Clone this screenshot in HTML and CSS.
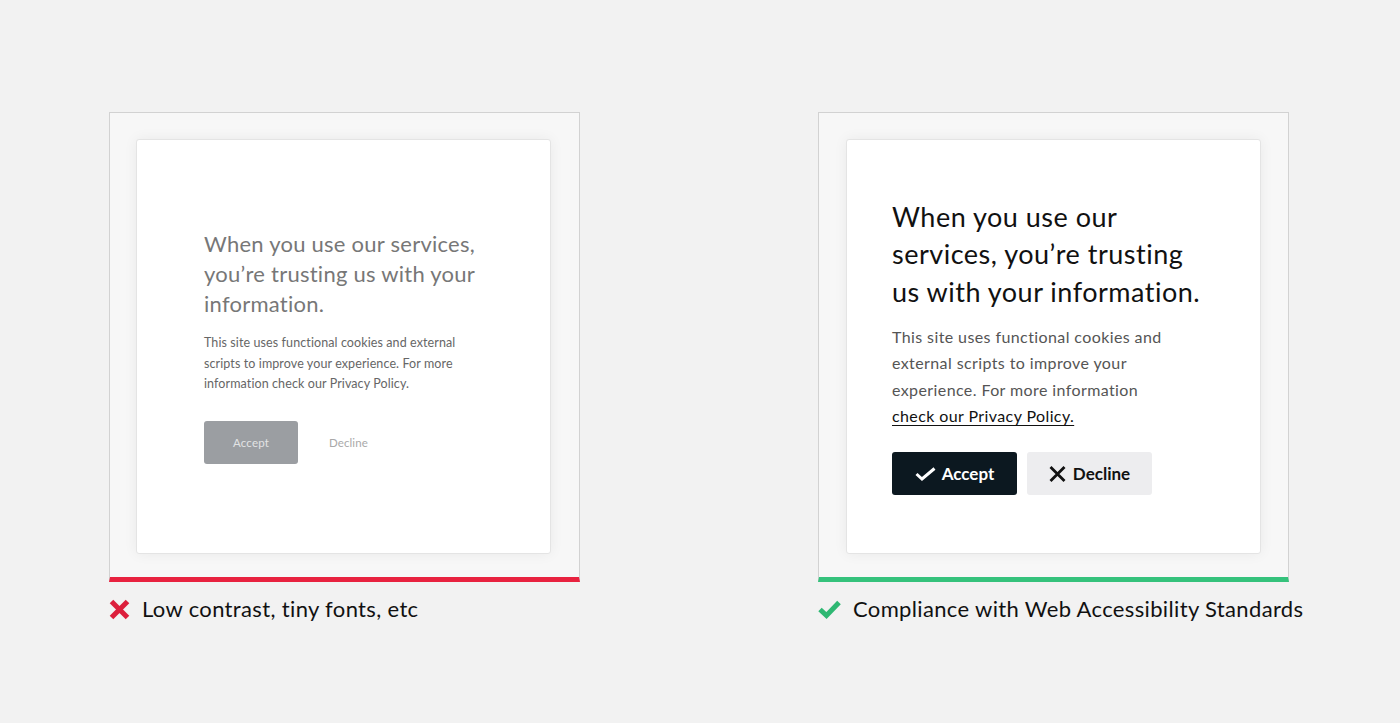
FILE: index.html
```html
<!DOCTYPE html>
<html>
<head>
<meta charset="utf-8">
<link rel="stylesheet" href="styles.css">
</head>
<body>
<main class="page">
  <section class="column">
    <div class="frame frame-bad">
      <div class="card card-bad">
        <h2 class="title-bad">When you use our services,<br>you’re trusting us with your<br>information.</h2>
        <p class="text-bad">This site uses functional cookies and external<br>scripts to improve your experience. For more<br>information check our Privacy Policy.</p>
        <div class="actions-bad">
          <button class="btn-bad-accept">Accept</button>
          <span class="btn-bad-decline">Decline</span>
        </div>
      </div>
    </div>
    <div class="label">
      <svg class="label-icon" width="21" height="21" viewBox="0 0 21 21"><path d="M2.5 2.5 L18.5 18.5 M18.5 2.5 L2.5 18.5" stroke="#dc1f3c" stroke-width="5" fill="none"/></svg>
      <span>Low contrast, tiny fonts, etc</span>
    </div>
  </section>

  <section class="column">
    <div class="frame frame-good">
      <div class="card card-good">
        <h2 class="title-good">When you use our<br>services, you’re trusting<br>us with your information.</h2>
        <p class="text-good">This site uses functional cookies and<br>external scripts to improve your<br>experience. For more information<br><a class="link" href="#">check our Privacy Policy.</a></p>
        <div class="actions-good">
          <button class="btn btn-accept">
            <svg width="21" height="14" viewBox="0 0 21 14"><path d="M1.5 7 L7 12 L19.5 1.5" stroke="#fff" stroke-width="3" fill="none"/></svg>
            <span>Accept</span>
          </button>
          <button class="btn btn-decline">
            <svg width="17" height="16" viewBox="0 0 17 16"><path d="M1.5 1 L15.5 15 M15.5 1 L1.5 15" stroke="#111" stroke-width="2.8" fill="none"/></svg>
            <span>Decline</span>
          </button>
        </div>
      </div>
    </div>
    <div class="label">
      <svg class="label-icon" width="23" height="21" viewBox="0 0 23 21"><path d="M2 10.5 L8.5 16.5 L21 3.5" stroke="#2fb873" stroke-width="5" fill="none"/></svg>
      <span>Compliance with Web Accessibility Standards</span>
    </div>
  </section>
</main>
</body>
</html>
```

FILE: styles.css
```css
* { box-sizing: border-box; }
html, body { margin: 0; padding: 0; }
body {
  background: #f2f2f2;
  font-family: Lato, "Open Sans", "Liberation Sans", sans-serif;
  width: 1400px;
  height: 723px;
  overflow: hidden;
}
.page {
  display: flex;
  gap: 238px;
  padding: 112px 0 0 109px;
}
.column {
  width: 471px;
  display: flex;
  flex-direction: column;
}
.frame {
  width: 471px;
  background: #f7f7f7;
  border: 1px solid #d2d2d2;
  border-bottom: 5px solid #e8223f;
  padding: 26px 28px 23px 26px;
}
.frame-good {
  border-bottom-color: #35c27c;
  padding-left: 27px;
  padding-right: 27px;
}
.card {
  width: 415px;
  height: 415px;
  background: #fff;
  border: 1px solid #e4e4e4;
  border-radius: 3px;
  box-shadow: 0 0 14px rgba(0, 0, 0, 0.06);
  display: flex;
  flex-direction: column;
  justify-content: center;
}
.card-bad { padding-left: 67px; }
.card-good { padding-left: 45px; }

h2, p { margin: 0; font-weight: 400; }

.title-bad {
  font-size: 22px;
  letter-spacing: 0.25px;
  line-height: 30px;
  color: #777;
  white-space: nowrap;
}
.text-bad {
  margin-top: 14px;
  font-size: 12.5px;
  letter-spacing: 0.1px;
  line-height: 20.5px;
  color: #666;
  white-space: nowrap;
}
.actions-bad {
  margin-top: 26px;
  display: flex;
  align-items: center;
  gap: 31px;
}
.btn-bad-accept {
  width: 94px;
  height: 43px;
  border: none;
  border-radius: 3px;
  background: #9b9ea2;
  color: #e2e3e4;
  font-family: inherit;
  font-size: 11.5px;
  letter-spacing: 0.2px;
}
.btn-bad-decline {
  font-size: 11.5px;
  letter-spacing: 0.1px;
  color: #a9a9a9;
}

.title-good {
  font-size: 27px;
  letter-spacing: 0.5px;
  line-height: 37.5px;
  color: #111;
  white-space: nowrap;
}
.text-good {
  margin-top: 14px;
  font-size: 16px;
  letter-spacing: 0.4px;
  line-height: 26.3px;
  color: #555;
  white-space: nowrap;
}
.link {
  color: #111;
  text-decoration: underline;
  text-underline-offset: 3px;
}
.actions-good {
  margin-top: 23px;
  display: flex;
  gap: 10px;
}
.btn {
  width: 125px;
  height: 43px;
  border: none;
  border-radius: 3px;
  display: flex;
  align-items: center;
  justify-content: center;
  gap: 6px;
  font-family: inherit;
  font-size: 17px;
  font-weight: 700;
  padding: 0;
}
.btn-accept { background: #0c1820; color: #fff; }
.btn-decline { background: #ededef; color: #111; gap: 7px; }

.label {
  margin-top: 13px;
  display: flex;
  align-items: center;
  gap: 12px;
  font-size: 22px;
  letter-spacing: 0.35px;
  line-height: 28px;
  color: #111;
  white-space: nowrap;
}
.label-icon { flex: none; }
```
